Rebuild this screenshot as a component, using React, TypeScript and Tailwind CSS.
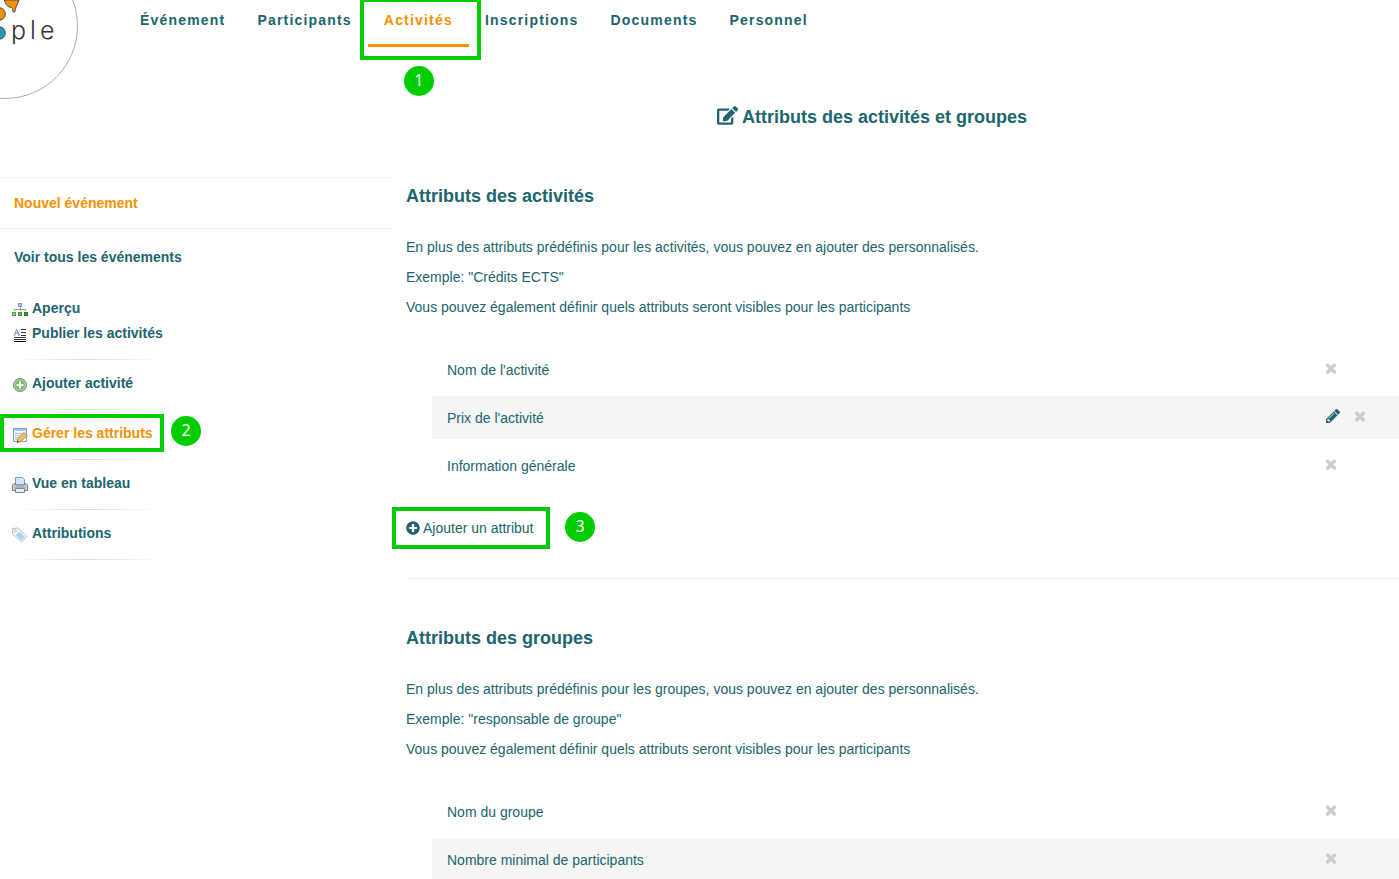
import { ReactNode } from "react";
import { FaEdit, FaPlusCircle } from "react-icons/fa";

function Logo() {
  return (
    <svg viewBox="0 0 80 100" className="block h-[100px] w-20" aria-label="people">
      <circle cx="5" cy="26" r="72.5" fill="#fff" stroke="#999" strokeWidth="0.8" />
      <path
        d="M4.500 0C5 4 8 7.500 11.500 7.500C13 7.500 12.500 9 12.800 11C13.200 13 15.500 12.500 15.500 9.500C15.500 6 18 4 19 0Z"
        fill="#f39200"
        stroke="#4a4a4a"
        strokeWidth="1"
      />
      <circle cx="-1" cy="14" r="6.3" fill="#f39200" stroke="#4a4a4a" />
      <circle cx="-1" cy="33" r="6.3" fill="#1e9bb0" stroke="#4a4a4a" />
      <text x="11" y="39" fill="#333" className="font-['Inter'] text-[25px] font-light tracking-[4px]">
        ple
      </text>
    </svg>
  );
}

function TreeIcon() {
  return (
    <svg viewBox="0 0 16 16" className="size-4 shrink-0" shapeRendering="crispEdges" aria-hidden="true">
      <path d="M6 1h4v4H6z" fill="#6f9be0" />
      <path d="M7 2h2v2H7z" fill="#a4c4f2" />
      <path d="M8 5v2M2.500 9V7.500h11V9M8 7v2" fill="none" stroke="#9aa2aa" />
      <path d="M0 10h4v4H0z" fill="#4fa045" />
      <path d="M1 11h2v2H1z" fill="#9ad88c" />
      <path d="M6 10h4v4H6z" fill="#3f8f37" />
      <path d="M7 11h2v2H7z" fill="#74bd68" />
      <path d="M12 10h4v4h-4z" fill="#2c7a27" />
      <path d="M13 11h2v2h-2z" fill="#4a9a40" />
    </svg>
  );
}

function TextIcon() {
  return (
    <svg viewBox="0 0 16 16" className="size-4 shrink-0" aria-hidden="true">
      <path d="M2.500 8 4.500 2.500 7 8M3.500 6h3M1.500 8h2M6 8h2" fill="none" stroke="#6a91c9" />
      <path d="M9 2.500h5M9 5.500h5M9 8.500h5M2 10.500h12M2 12.500h12" stroke="#333" />
      <path d="M2 14.500h12" stroke="#111" />
    </svg>
  );
}

function AddIcon() {
  return (
    <svg viewBox="0 0 16 16" className="size-4 shrink-0" aria-hidden="true">
      <circle cx="8" cy="8" r="6.500" fill="#79bb69" stroke="#6c9a66" />
      <circle cx="8" cy="8" r="5.300" fill="none" stroke="#b4dcaa" />
      <path d="M8 4.500v7M4.500 8h7" stroke="#fff" strokeWidth="2" />
    </svg>
  );
}

function FormEditIcon() {
  return (
    <svg viewBox="0 0 16 16" className="size-4 shrink-0" aria-hidden="true">
      <path d="M1.500 1.500h13v13h-13z" fill="#f4f8fd" stroke="#7ba0d4" />
      <path d="M2 2h12v2H2z" fill="#a7c5ec" />
      <path d="M3 6.500h10M3 8.500h8M3 10.500h4M3 12.500h2" stroke="#a9c4e2" />
      <path d="m5 15.500 1-4 6-6 3 3-6 6z" fill="#f3c25b" stroke="#b98d45" />
      <path d="m5 15.500 .5-2 1.500 1.500z" fill="#333" />
    </svg>
  );
}

function PrinterIcon() {
  return (
    <svg viewBox="0 0 16 16" className="size-4 shrink-0" aria-hidden="true">
      <path d="M3.500 8V.5h7l2 2V8z" fill="#d5e6fa" stroke="#6f9bd3" />
      <path d="M.5 8 2 6.500h1.500V8h9V6.500H14L15.500 8v5.500H.5z" fill="#d3d5d8" stroke="#777b80" />
      <path d="M2 10h12" stroke="#8b8f94" />
      <path d="M3.500 11.500h9v4h-9z" fill="#e3effc" stroke="#7d8894" />
    </svg>
  );
}

function TagIcon() {
  return (
    <svg viewBox="0 0 16 16" className="size-4 shrink-0" aria-hidden="true">
      <path d="M.5 1.500 6 1l9 8.500-5.500 5.500-9-8.500z" fill="#fafafa" stroke="#bdbdbd" />
      <path d="m7.500 4.500 5.500 5.500-3.500 3.500-6-5.500z" fill="#a3d6f8" />
      <circle cx="3.300" cy="3.800" r="1.200" fill="#fff" stroke="#aaa" strokeWidth=".8" />
    </svg>
  );
}

function PencilIcon() {
  return (
    <svg viewBox="0 149 1515 1515" className="size-[14px]" fill="currentColor" aria-hidden="true">
      <path d="M363 1536l91-91-235-235-91 91v107h128v128h107zM886 608q0-22-22-22-10 0-17 7l-542 542q-7 7-7 17 0 22 22 22 10 0 17-7l542-542q7-7 7-17zM832 416l416 416-832 832h-416v-416zM1515 512q0 53-37 90l-166 166-416-416 166-165q36-38 90-38 53 0 91 38l235 234q37 39 37 91z" />
    </svg>
  );
}

function CrossIcon() {
  return (
    <svg viewBox="0 0 1792 1792" className="size-4" fill="currentColor" aria-hidden="true">
      <path d="M1490 1322q0 40-28 68l-136 136q-28 28-68 28t-68-28l-294-294-294 294q-28 28-68 28t-68-28l-136-136q-28-28-28-68t28-68l294-294-294-294q-28-28-28-68t28-68l136-136q28-28 68-28t68 28l294 294 294-294q28-28 68-28t68 28l136 136q28 28 28 68t-28 68l-294 294 294 294q28 28 28 68z" />
    </svg>
  );
}

function Badge({ n, className }: { n: number; className: string }) {
  return (
    <span
      className={`absolute flex size-[30px] items-center justify-center rounded-full bg-[#00cd00] pb-0.5 font-['Noto_Sans',sans-serif] text-base font-normal tracking-normal text-white ${className}`}
    >
      {n}
    </span>
  );
}

function Frame({ className }: { className: string }) {
  return <span className={`pointer-events-none absolute border-4 border-[#00cd00] ${className}`} />;
}

const navItems = ["Événement", "Participants", "Activités", "Inscriptions", "Documents", "Personnel"];

function TopNav() {
  return (
    <nav className="flex pl-11 text-sm leading-5 font-bold tracking-[0.085em]">
      {navItems.map((item) =>
        item === "Activités" ? (
          <div key={item} className="relative">
            <a href="#" aria-current="page" className="block border-b-3 border-[#f39200] px-4 pt-[10px] pb-[14px] text-[#f39200]">
              {item}
            </a>
            <Frame className="-top-0.5 -right-3 -left-2 h-[62px]" />
            <Badge n={1} className="top-[66px] left-9" />
          </div>
        ) : (
          <a key={item} href="#" className="block px-4 py-[10px]">
            {item}
          </a>
        ),
      )}
    </nav>
  );
}

function Rule() {
  return <hr className="ml-3 h-px w-[150px] border-0 bg-linear-to-r from-transparent via-[#ddd] to-transparent" />;
}

function SideLink({ icon, children, active }: { icon: ReactNode; children: ReactNode; active?: boolean }) {
  return (
    <a href="#" className={`flex h-[25px] items-start gap-1 pl-3 leading-[23px] ${active ? "text-[#f39200]" : ""}`}>
      <span className="pt-[5px]">{icon}</span>
      {children}
    </a>
  );
}

function Sidebar() {
  return (
    <aside className="w-[391px] shrink-0 text-sm font-bold">
      <a href="#" className="block border-y border-[#f2f2f2] px-[14px] py-[15px] leading-5 text-[#f39200]">
        Nouvel événement
      </a>
      <a href="#" className="block px-[14px] pt-[18px] pb-[30px] leading-5">
        Voir tous les événements
      </a>
      <SideLink icon={<TreeIcon />}>Aperçu</SideLink>
      <SideLink icon={<TextIcon />}>Publier les activités</SideLink>
      <div className="flex flex-col gap-3 pt-3">
        <Rule />
        <SideLink icon={<AddIcon />}>Ajouter activité</SideLink>
        <Rule />
        <div className="relative">
          <SideLink active icon={<FormEditIcon />}>Gérer les attributs</SideLink>
          <Frame className="-top-2 left-0 h-[38px] w-[164px]" />
          <Badge n={2} className="-top-[6px] left-[171px]" />
        </div>
        <Rule />
        <SideLink icon={<PrinterIcon />}>Vue en tableau</SideLink>
        <Rule />
        <SideLink icon={<TagIcon />}>Attributions</SideLink>
        <Rule />
      </div>
    </aside>
  );
}

type Row = { label: string; editable?: boolean };

function AttributeTable({ rows }: { rows: Row[] }) {
  return (
    <table className="ml-[26px] w-[calc(100%-26px)] border-separate border-spacing-y-[5px]">
      <tbody>
        {rows.map((row, i) => (
          <tr key={row.label} className={i % 2 ? "bg-[#f5f5f5]" : ""}>
            <td className="h-[43px] pl-[15px]">{row.label}</td>
            <td className="w-[76px] pb-[3px]">
              <span className="flex items-center gap-3">
                {row.editable && (
                  <button type="button" aria-label="Modifier" className="pl-[3px]">
                    <PencilIcon />
                  </button>
                )}
                <button type="button" aria-label="Supprimer" className="text-[#ccc]">
                  <CrossIcon />
                </button>
              </span>
            </td>
          </tr>
        ))}
      </tbody>
    </table>
  );
}

function Section({ title, lines, rows }: { title: string; lines: string[]; rows: Row[] }) {
  return (
    <section>
      <h2 className="text-lg leading-6 font-bold">{title}</h2>
      <div className="pt-6 pb-[21px] leading-[30px]">
        {lines.map((line) => (
          <p key={line}>{line}</p>
        ))}
      </div>
      <AttributeTable rows={rows} />
    </section>
  );
}

export default function App() {
  return (
    <div className="h-screen overflow-hidden bg-white font-['Liberation_Sans',Arial,sans-serif] text-sm text-[#20656e]">
      <header className="flex h-[100px] items-start">
        <Logo />
        <TopNav />
      </header>
      <h1 className="flex h-[77px] items-start justify-center gap-1 pt-[5px] pr-[46px] pl-[391px] text-lg leading-6 font-bold">
        <FaEdit className="size-[21px]" />
        Attributs des activités et groupes
      </h1>
      <div className="flex items-start">
        <Sidebar />
        <main className="min-w-0 flex-1 pt-[7px] pl-[15px]">
          <Section
            title="Attributs des activités"
            lines={[
              "En plus des attributs prédéfinis pour les activités, vous pouvez en ajouter des personnalisés.",
              'Exemple: "Crédits ECTS"',
              "Vous pouvez également définir quels attributs seront visibles pour les participants",
            ]}
            rows={[
              { label: "Nom de l'activité" },
              { label: "Prix de l'activité", editable: true },
              { label: "Information générale" },
            ]}
          />
          <div className="relative pt-[26px] pb-10">
            <button type="button" className="flex items-center gap-[3px] leading-5">
              <FaPlusCircle className="size-[14px]" />
              Ajouter un attribut
            </button>
            <Frame className="top-[15px] -left-[14px] h-[42px] w-[158px]" />
            <Badge n={3} className="top-5 left-[159px]" />
          </div>
          <hr className="mb-[47px] border-[#eee]" />
          <Section
            title="Attributs des groupes"
            lines={[
              "En plus des attributs prédéfinis pour les groupes, vous pouvez en ajouter des personnalisés.",
              'Exemple: "responsable de groupe"',
              "Vous pouvez également définir quels attributs seront visibles pour les participants",
            ]}
            rows={[{ label: "Nom du groupe" }, { label: "Nombre minimal de participants" }]}
          />
        </main>
      </div>
    </div>
  );
}
